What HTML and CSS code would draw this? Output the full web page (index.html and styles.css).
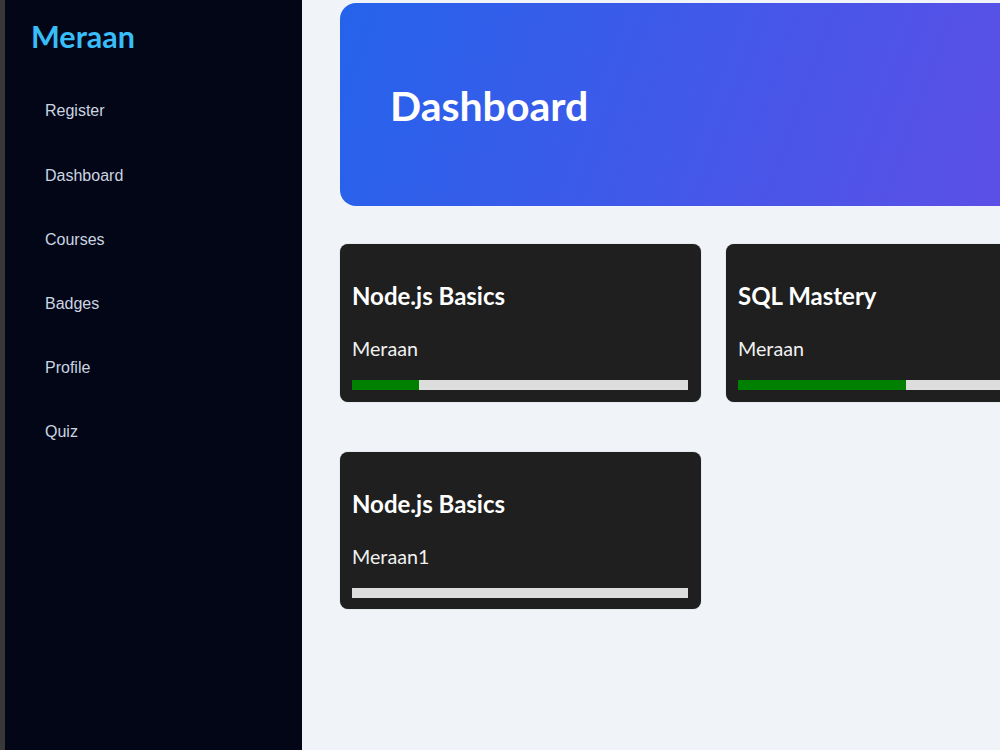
FILE: index.html
```html
<!DOCTYPE html>
<html lang="en">
<head>
    <meta charset="UTF-8">
    <meta name="viewport" content="width=device-width, initial-scale=1.0">
    <title>Meraan - Dashboard</title>
    <link rel="stylesheet" href="styles.css">
</head>
<body>

    <div class="edge"></div>

    <!-- Sidebar -->
    <aside class="sidebar">
        <div class="logo">Meraan</div>
        <ul class="nav">
            <li>Register</li>
            <li>Dashboard</li>
            <li>Courses</li>
            <li>Badges</li>
            <li>Profile</li>
            <li>Quiz</li>
        </ul>
    </aside>

    <!-- Main Content -->
    <main class="main">
        <div class="hero">
            <h1>Dashboard</h1>
        </div>

        <div class="courses">
            <div class="course-card">
                <h3>Node.js Basics</h3>
                <p>Meraan</p>
                <div class="progress"><div class="progress-fill" style="width: 20%"></div></div>
            </div>
            <div class="course-card">
                <h3>SQL Mastery</h3>
                <p>Meraan</p>
                <div class="progress"><div class="progress-fill" style="width: 50%"></div></div>
            </div>
            <div class="course-card">
                <h3>Node.js Basics</h3>
                <p>Meraan1</p>
                <div class="progress"><div class="progress-fill" style="width: 0%"></div></div>
            </div>
        </div>
    </main>

</body>
</html>
```
FILE: styles.css
```css
* {
    margin: 0;
    padding: 0;
    box-sizing: border-box;
}

body {
    height: 100vh;
    display: flex;
    overflow: hidden;
    background-color: #f0f4f9;
    font-family: 'Lato', sans-serif;
}

.edge {
    width: 5px;
    flex-shrink: 0;
    background-color: #383838;
}

/* Sidebar */
.sidebar {
    width: 297px;
    flex-shrink: 0;
    background-color: #020617;
    padding-top: 18px;
}

.logo {
    padding-left: 26px;
    margin-bottom: 24.8px;
    font-size: 30.5px;
    font-weight: 700;
    line-height: 1.2;
    color: #38bdf8;
}

.nav {
    list-style: none;
}

.nav li {
    padding: 23.05px 0 23.05px 40px;
    font-family: 'Liberation Sans', Arial, sans-serif;
    font-size: 16px;
    line-height: 18px;
    color: #cbd5e1;
    cursor: pointer;
}

/* Main */
.main {
    flex: 1;
    min-width: 760px;
    padding: 3px 0 0 38px;
}

.hero {
    width: 760px;
    height: 203px;
    display: flex;
    align-items: center;
    padding: 3px 0 0 50px;
    border-radius: 16px;
    background: linear-gradient(110deg, #2563eb 0%, #5b4fe7 87%, #6149e6 100%);
}

.hero h1 {
    font-size: 41px;
    font-weight: 700;
    line-height: 1.2;
    color: #ffffff;
}

/* Course cards */
.courses {
    display: grid;
    grid-template-columns: repeat(2, 361px);
    column-gap: 25px;
    row-gap: 50px;
    margin-top: 38px;
}

.course-card {
    height: 157.5px;
    padding: 0 13px 0 12px;
    background-color: #1f1f1f;
    border-radius: 8px;
    box-shadow: 0 0 1px rgba(0, 0, 0, 0.4);
}

.course-card h3 {
    margin-top: 38.3px;
    font-size: 24px;
    font-weight: 700;
    line-height: 1.2;
    color: #ffffff;
}

.course-card p {
    margin-top: 26.2px;
    font-size: 19.7px;
    line-height: 1.2;
    color: #f1f1f1;
}

.progress {
    height: 10px;
    margin-top: 19.1px;
    background-color: #dddddd;
}

.progress-fill {
    height: 100%;
    background-color: #008000;
}
```
